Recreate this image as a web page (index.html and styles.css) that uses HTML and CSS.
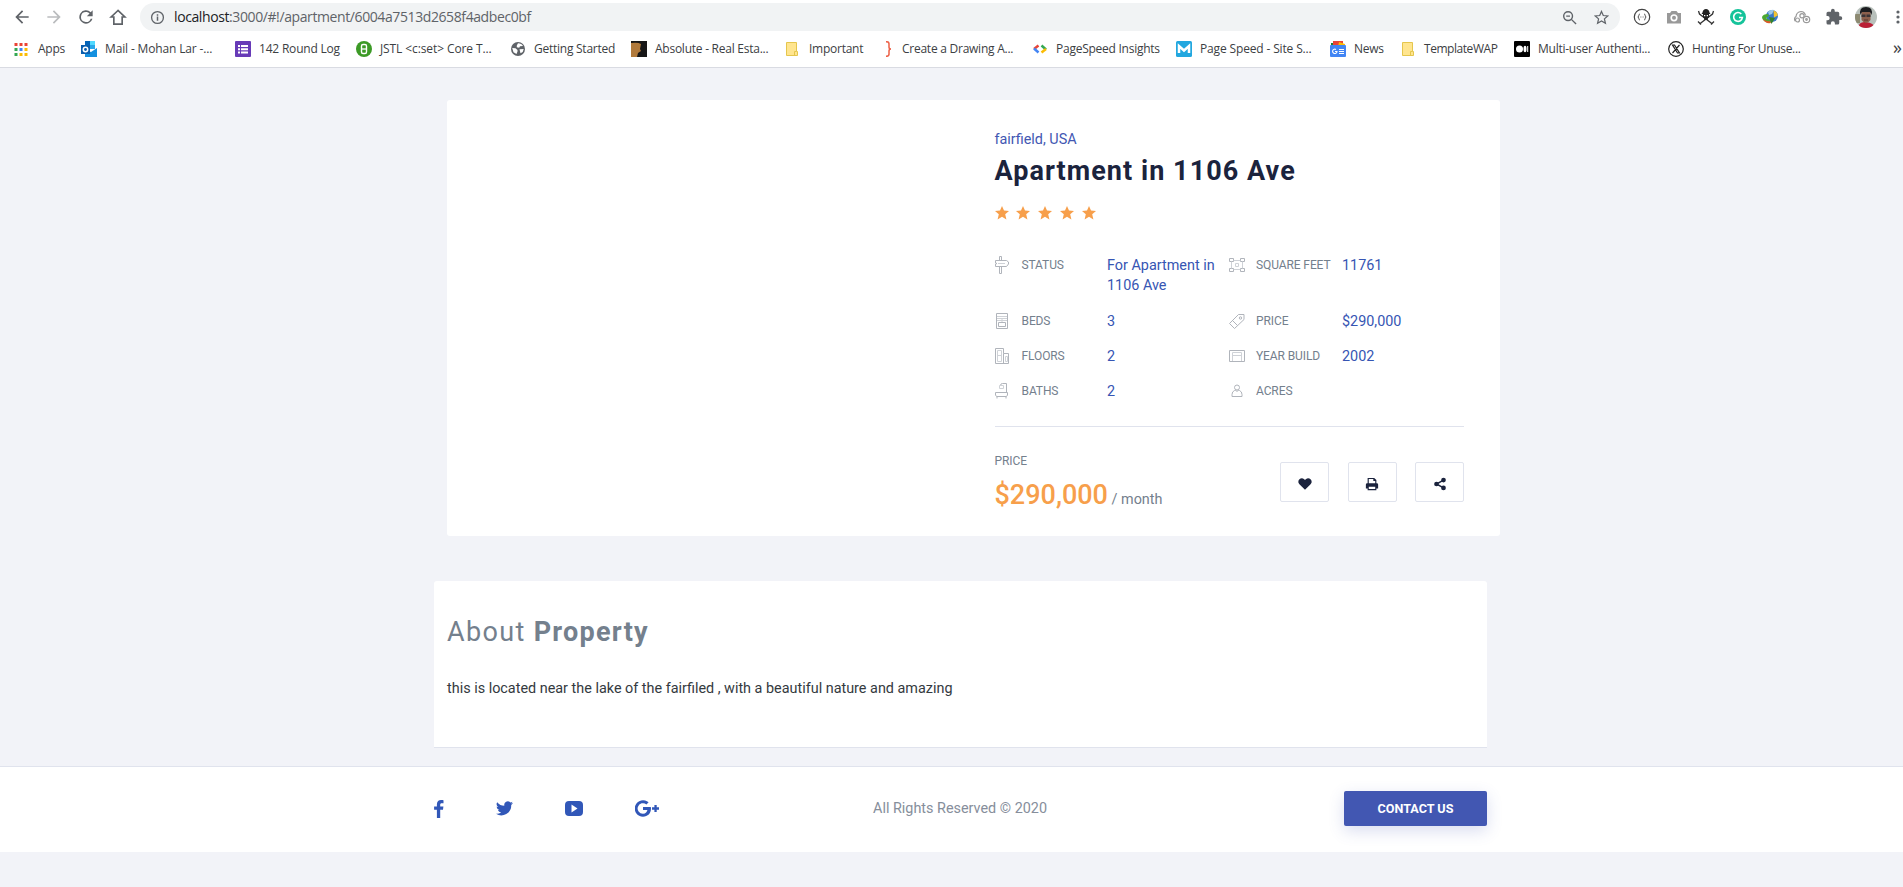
FILE: index.html
```html
<!DOCTYPE html>
<html lang="en">
<head>
<meta charset="utf-8">
<title>Apartment in 1106 Ave</title>
<link rel="stylesheet" href="styles.css">
</head>
<body>
<header class="browser">
  <div class="toolbar">
    <svg class="nav-icon" viewBox="0 0 24 24"><path d="M20 11H7.8l5.6-5.6L12 4l-8 8 8 8 1.4-1.4L7.8 13H20z"/></svg>
    <svg class="nav-icon muted" viewBox="0 0 24 24"><path d="M4 11h12.2l-5.6-5.6L12 4l8 8-8 8-1.4-1.4 5.6-5.6H4z"/></svg>
    <svg class="nav-icon" viewBox="0 0 24 24"><path d="M17.65 6.35A8 8 0 1 0 19.73 14h-2.08A6 6 0 1 1 12 6c1.66 0 3.14.69 4.22 1.78L13 11h7V4z"/></svg>
    <svg class="nav-icon" viewBox="0 0 24 24"><path d="M12 4.200 3.800 12H7v8.500h10V12h3.200z" fill="none" stroke="#5f6368" stroke-width="2"/></svg>
    <div class="address">
      <svg class="info" viewBox="0 0 16 16"><circle cx="8" cy="8" r="6.3" fill="none" stroke="#5f6368" stroke-width="1.4"/><path d="M7.2 7h1.6v4.5H7.200zM7.200 4.500h1.600v1.500H7.200z"/></svg>
      <span class="url"><b>localhost</b>:3000/#!/apartment/6004a7513d2658f4adbec0bf</span>
      <svg class="tool" viewBox="0 0 16 16"><g fill="none" stroke="#5f6368" stroke-width="1.5"><circle cx="6.500" cy="6.500" r="4.700"/><path d="M10 10l5 5M4.500 6.500h4"/></g></svg>
      <svg class="tool" viewBox="0 0 16 16"><path d="M8 1.500l1.900 4.400 4.800.4-3.600 3.200 1.100 4.700L8 11.700l-4.200 2.500 1.100-4.700L1.300 6.300l4.800-.4z" fill="none" stroke="#5f6368" stroke-width="1.300"/></svg>
    </div>
    <div class="extensions">
      <svg viewBox="0 0 18 18"><circle cx="9" cy="9" r="7.700" fill="none" stroke="#444" stroke-width="1.200"/><path d="M6.800 6c-1.500 0-.5 3-2 3 1.500 0 .5 3 2 3M11.200 6c1.500 0 .5 3 2 3-1.500 0-.5 3-2 3M7.500 9h.8M9.700 9h.8" fill="none" stroke="#444"/></svg>
      <svg viewBox="0 0 18 18"><path d="M2 5h3l1.500-2h5L13 5h3v10.500H2z" fill="#999"/><circle cx="9" cy="9.800" r="3.600" fill="#fff"/><circle cx="9" cy="9.800" r="2" fill="#999"/></svg>
      <svg viewBox="0 0 18 18"><path d="M1.500 3l1 3 13 10M16.500 3l-1 3-13 10M1 13.500l3 3M17 13.500l-3 3" fill="none" stroke="#333" stroke-width="1.300"/><path d="M5.500 4.500Q6 1 9 1t3.500 3.500L13.500 6h-9zM6 6h6v3l-1.200 1.200V12H7.200v-1.800L6 9z" fill="#222"/><path d="M7 7h1.300v1.300H7zM9.700 7H11v1.300H9.700z" fill="#fff"/></svg>
      <svg viewBox="0 0 18 18"><circle cx="9" cy="9" r="8" fill="#15c39a"/><path d="M12.300 6A4.400 4.400 0 1 0 13.400 9.500H10" fill="none" stroke="#fff" stroke-width="1.600"/></svg>
      <svg viewBox="0 0 18 18"><circle cx="11" cy="8" r="6" fill="#3a78c8"/><path d="M7 4q3-3 6-2l-2 4-3 1z" fill="#9cc8e8"/><path d="M12.500 2.500q4 1 4.300 5l-3.800 2z" fill="#f2c230"/><path d="M1 9q1-3 6-3l1 2-3 2 5 3-1 2Q1 14 1 9z" fill="#4ca832"/><path d="M2 11q4 3 7 2l1 2Q4 16 2 11z" fill="#dc5a2a"/><path d="M8 9l6 1-3.500 6z" fill="#35802c"/></svg>
      <svg viewBox="0 0 18 18"><g fill="none" stroke="#999" stroke-width="1.200"><path d="M2.200 13A3 3 0 0 1 3 8.500q.5-4.500 5-5 3.500 0 4.500 4"/><circle cx="9" cy="7.800" r="2.100"/><circle cx="4.500" cy="12" r="2"/><circle cx="13.500" cy="11.500" r="3.200"/><circle cx="13.500" cy="11.500" r=".8"/></g></svg>
      <svg viewBox="0 0 24 24"><path d="M20.500 11H19V7a2 2 0 0 0-2-2h-4V3.500a2.500 2.500 0 0 0-5 0V5H4a2 2 0 0 0-2 2v3.800h1.500a2.700 2.700 0 0 1 0 5.400H2V20a2 2 0 0 0 2 2h3.800v-1.500a2.700 2.700 0 0 1 5.400 0V22H17a2 2 0 0 0 2-2v-4h1.500a2.500 2.500 0 0 0 0-5z" fill="#5f6368"/></svg>
    </div>
    <svg class="avatar" viewBox="0 0 22 22"><clipPath id="face"><circle cx="11" cy="11" r="11"/></clipPath><g clip-path="url(#face)"><path d="M0 0h22v22H0z" fill="#b8c0bb"/><path d="M0 8h5v9H0z" fill="#8d8a72"/><path d="M3 22q1-7 8-6 8 1 9 6z" fill="#bb2036"/><path d="M6.500 6h9v8q-4.500 6-9 0z" fill="#8b5f4c"/><path d="M5.500 9q-2-8 5.500-8t5.500 8l-1.500-3H7z" fill="#1c1d20"/><path d="M6.500 8.500h4v2.500h-4zM11.500 8.500h4v2.500h-4z" fill="#3a3436"/><path d="M9 14h4" stroke="#5b342c"/></g></svg>
    <svg class="kebab" viewBox="0 0 4 16"><circle cx="2" cy="3" r="1.600"/><circle cx="2" cy="8" r="1.600"/><circle cx="2" cy="13" r="1.600"/></svg>
  </div>
  <nav class="bookmarks">
    <a class="bm bm-apps"><svg viewBox="0 0 16 16"><path d="M1.500 2h3v3h-3zM6.500 2h3v3h-3zM11.500 2h3v3h-3z" fill="#ea4335"/><path d="M1.500 7h3v3h-3zM1.500 12h3v3h-3z" fill="#34a853"/><path d="M6.500 7h3v3h-3z" fill="#4285f4"/><path d="M11.500 7h3v3h-3zM6.500 12h3v3h-3zM11.500 12h3v3h-3z" fill="#fbbc04"/></svg><span>Apps</span></a>
    <a class="bm bm-mail"><svg viewBox="0 0 16 16"><path d="M4 0h10v8H4z" fill="#28a8ea"/><path d="M9 0h5v4H9z" fill="#50d9ff"/><path d="M4 0h5v4H4z" fill="#0364b8"/><path d="M4 9l6 2 6-4v9H4z" fill="#1490df"/><path d="M0 4h9v9H0z" fill="#0a5ead"/><circle cx="4.500" cy="8.500" r="2.200" fill="none" stroke="#fff" stroke-width="1.500"/></svg><span>Mail - Mohan Lar -...</span></a>
    <a class="bm bm-log"><svg viewBox="0 0 16 16"><rect width="16" height="16" rx="1" fill="#673ab7"/><path d="M3 4h2v2H3zM3 7.200h2v2H3zM3 10.400h2v2H3zM6 4h7v2H6zM6 7.200h7v2H6zM6 10.400h7v2H6z" fill="#fff"/></svg><span>142 Round Log</span></a>
    <a class="bm bm-jstl"><svg viewBox="0 0 16 16"><circle cx="8" cy="8" r="8" fill="#3c9a26"/><rect x="5.500" y="3.500" width="5" height="9" rx="1.500" fill="none" stroke="#fff" stroke-width="1.400"/><path d="M5.500 8h5" stroke="#fff" stroke-width="1.300"/></svg><span>JSTL &lt;c:set&gt; Core T...</span></a>
    <a class="bm bm-start"><svg viewBox="0 0 16 16"><circle cx="8" cy="8" r="7" fill="#5f6368"/><path d="M2.200 7l3.300.3 2 1.700v1.500L6.500 13 3.500 11.200zM8 2.200q3.500 0 5 2.800l-3 .2-.8 1.600-2.400-.6 0-1.700zM9.500 8.300l4.200-.3-1 3-2.200 1.200z" fill="#fff"/></svg><span>Getting Started</span></a>
    <a class="bm bm-abs"><svg viewBox="0 0 16 16"><path d="M0 0h16v16H0z" fill="#171717"/><path d="M0 2q7-1 10 1l-1 5 1 2-3 2-1 4H0z" fill="#b17a3b"/></svg><span>Absolute - Real Esta...</span></a>
    <a class="bm bm-imp"><svg viewBox="0 0 16 16"><path d="M2.500 1.500h10v9h1v4h-11z" fill="#ffe58f" stroke="#e5c64d"/><path d="M10.500 14v-3.500h2" fill="none" stroke="#e5c64d"/></svg><span>Important</span></a>
    <a class="bm bm-draw"><svg viewBox="0 0 16 16"><path d="M6 .7q3 0 3 2v3.500Q9 8 11 8q-2 0-2 2v3.300q0 2-3 2" fill="none" stroke="#ed6046" stroke-width="1.500"/></svg><span>Create a Drawing A...</span></a>
    <a class="bm bm-psi"><svg viewBox="0 0 16 16"><g fill="none" stroke-width="2.500"><path d="M6.500 4.500L2 8" stroke="#ea4335"/><path d="M2 7.500l4.500 4" stroke="#4285f4"/><path d="M9.500 4.500L14 8.500" stroke="#34a853"/><path d="M14 8l-4.500 3.500" stroke="#fbbc04"/></g></svg><span>PageSpeed Insights</span></a>
    <a class="bm bm-speed"><svg viewBox="0 0 16 16"><rect width="16" height="16" rx="1.500" fill="#22a7df"/><path d="M3 12V5l5 4.500L13 5v7" fill="none" stroke="#fff" stroke-width="2.500"/></svg><span>Page Speed - Site S...</span></a>
    <a class="bm bm-news"><svg viewBox="0 0 16 16"><path d="M1 2h11v5H1z" fill="#188038"/><path d="M3 0h10v5H3z" fill="#ea4335"/><path d="M9 1l6 2v3H8z" fill="#fbbc04"/><rect y="4" width="16" height="12" rx="1" fill="#4285f4"/><path d="M6 8.500A2.200 2.200 0 1 0 7 10.500H5M9 8.500h5M9 10.500h5M9 12.500h5" fill="none" stroke="#fff" stroke-width="1.100"/></svg><span>News</span></a>
    <a class="bm bm-wap"><svg viewBox="0 0 16 16"><path d="M2.500 1.500h10v9h1v4h-11z" fill="#ffe58f" stroke="#e5c64d"/><path d="M10.500 14v-3.500h2" fill="none" stroke="#e5c64d"/></svg><span>TemplateWAP</span></a>
    <a class="bm bm-multi"><svg viewBox="0 0 16 16"><rect width="16" height="16" rx="1" fill="#000"/><circle cx="5.500" cy="8" r="3.500" fill="#fff"/><ellipse cx="11" cy="8" rx="1.500" ry="3.300" fill="#fff"/><path d="M13.200 5h1v6h-1z" fill="#fff"/></svg><span>Multi-user Authenti...</span></a>
    <a class="bm bm-hunt"><svg viewBox="0 0 16 16"><circle cx="8" cy="8" r="7.300" fill="none" stroke="#222" stroke-width="1.200"/><path d="M4.500 4h2l5 8h-2zM11.500 4L4.500 12" fill="none" stroke="#222" stroke-width="1.200"/></svg><span>Hunting For Unuse...</span></a>
    <span class="overflow">»</span>
  </nav>
</header>

<main class="page">
  <section class="listing">
    <div class="details">
      <p class="place">fairfield, USA</p>
      <h1 class="title">Apartment in 1106 Ave</h1>
      <div class="stars">
        <svg viewBox="0 0 14 14"><path d="M7 0l2 4.600 5 .4-3.800 3.300 1.200 5.200L7 10.800l-4.400 2.700 1.200-5.200L0 5l5-.4z"/></svg>
        <svg viewBox="0 0 14 14"><path d="M7 0l2 4.600 5 .4-3.800 3.300 1.200 5.200L7 10.800l-4.400 2.700 1.200-5.200L0 5l5-.4z"/></svg>
        <svg viewBox="0 0 14 14"><path d="M7 0l2 4.600 5 .4-3.800 3.300 1.200 5.200L7 10.800l-4.400 2.700 1.200-5.200L0 5l5-.4z"/></svg>
        <svg viewBox="0 0 14 14"><path d="M7 0l2 4.600 5 .4-3.800 3.300 1.200 5.200L7 10.800l-4.400 2.700 1.200-5.200L0 5l5-.4z"/></svg>
        <svg viewBox="0 0 14 14"><path d="M7 0l2 4.600 5 .4-3.800 3.300 1.200 5.200L7 10.800l-4.400 2.700 1.200-5.200L0 5l5-.4z"/></svg>
      </div>
      <dl class="facts">
        <dt><svg viewBox="0 0 16 18"><path d="M4.500 4.500v-4h2v4M4.500 10.500v7h2v-7M.5 4.500h11l2 1.500v2l-2 2.500H.5V8l1.500-.5L.5 7z"/><path class="soft" d="M3 7.500h7"/></svg>STATUS</dt><dd>For Apartment in 1106 Ave</dd>
        <dt><svg viewBox="0 0 16 18"><path d="M.5 2.500h4v3h-4zM11.500 2.500h4v3h-4zM.5 12.500h4v3h-4zM11.500 12.500h4v3h-4z"/><path class="soft" d="M4.500 4.500h7M4.500 13.500h7M2.500 5.500v7M13.500 5.500v7M6.500 7.500h3v3h-3z"/></svg>SQUARE FEET</dt><dd>11761</dd>
        <dt><svg viewBox="0 0 16 18"><path d="M1.500 1.500h11v15h-11zM3.500 10.500h7v4h-7z"/><path class="soft" d="M2 4.500h10M2 6.500h10M7 7v3M2 8.500h10"/></svg>BEDS</dt><dd>3</dd>
        <dt><svg viewBox="0 0 16 18"><path d="M9.500 2.500h5.500v5l-9.500 9-5-5zM3.500 8.500l5 5"/><circle cx="11.500" cy="6" r="1.200"/></svg>PRICE</dt><dd>$290,000</dd>
        <dt><svg viewBox="0 0 16 18"><path d="M.5 1.500h8v5h5v10H.5zM8.500 6.500v10"/><path class="soft" d="M2.500 3.500h4v11h-4zM2.500 8.500h4M10.500 9.500h2v5h-2z"/></svg>FLOORS</dt><dd>2</dd>
        <dt><svg viewBox="0 0 16 18"><path d="M.5 3.500h15v11H.5z"/><path class="soft" d="M3.500 14V5.500h9V14M3.500 8.500h9"/></svg>YEAR BUILD</dt><dd>2002</dd>
        <dt><svg viewBox="0 0 16 18"><path d="M.5 10.500h12v2.500l-1 1.500h-10L.5 13zM2 14.500v2M11 14.500v2M11.500 10.500v-9h-4q-2 0-2 2"/><path class="soft" d="M4.500 3.500h4v3h-4z"/></svg>BATHS</dt><dd>2</dd>
        <dt><svg viewBox="0 0 16 18"><circle cx="8" cy="5.500" r="2.500"/><path d="M3 14.500v-2q0-3 2.500-4h1q1.500 1.500 3 0h1q2.500 1 2.500 4v2z"/></svg>ACRES</dt><dd></dd>
      </dl>
      <div class="offer">
        <div>
          <div class="offer-label">PRICE</div>
          <div class="amount"><strong>$290,000</strong> / month</div>
        </div>
        <div class="actions">
          <button><svg viewBox="0 0 16 16"><path d="M8 14.500L1.900 8.600C-1.500 5.200 1.500 1.500 4.400 1.500 6.300 1.500 7.400 2.800 8 3.500c.6-.7 1.700-2 3.600-2 2.900 0 5.900 3.700 2.500 7.100z"/></svg></button>
          <button><svg viewBox="0 0 16 16"><path d="M3 7V1h7.500L13 3.500V7h.5A1.500 1.500 0 0 1 15 8.500V13h-2v2H3v-2H1V8.500A1.500 1.500 0 0 1 2.500 7zm1.300 0h7.400V4.500H9.500V2.300H4.300zm0 4v2.700h7.400V11z" fill-rule="evenodd"/></svg></button>
          <button><svg viewBox="0 0 16 16"><circle cx="12" cy="3.500" r="2.700"/><circle cx="4" cy="8" r="2.700"/><circle cx="12" cy="12.500" r="2.700"/><path d="M12 3.500L4 8l8 4.500" fill="none" stroke="#1b233d" stroke-width="1.700"/></svg></button>
        </div>
      </div>
    </div>
  </section>
  <section class="about">
    <h2>About <b>Property</b></h2>
    <p>this is located near the lake of the fairfiled , with a beautiful nature and amazing</p>
  </section>
</main>

<footer class="footer">
  <div class="footer-inner">
    <div class="social">
      <svg class="fb" viewBox="0 0 10 18"><path d="M9.500.2v3H7.800C6.500 3.200 6.200 3.800 6.200 4.700v1.900h3.200l-.4 3.200H6.200V18H2.900V9.800H.1V6.600h2.800V4.200C2.900 1.500 4.600 0 7.100 0c1.200 0 2.200.1 2.400.2z"/></svg>
      <svg class="tw" viewBox="0 0 24 20"><path d="M24 2.400a10 10 0 0 1-2.800.8A4.900 4.900 0 0 0 23.300.5a10 10 0 0 1-3.100 1.200A4.900 4.900 0 0 0 11.800 6.200 14 14 0 0 1 1.700 1a4.900 4.900 0 0 0 1.500 6.600A4.900 4.900 0 0 1 1 7v.1A4.900 4.900 0 0 0 4.900 11.900a5 5 0 0 1-2.200.1 4.900 4.900 0 0 0 4.600 3.400A9.900 9.900 0 0 1 0 17.500 14 14 0 0 0 21.500 5.100 10 10 0 0 0 24 2.400z"/></svg>
      <svg class="yt" viewBox="0 0 18 15"><path d="M4 0h10q4 0 4 4v7q0 4-4 4H4q-4 0-4-4V4q0-4 4-4zm2.500 3.500v8l6-4z" fill-rule="evenodd"/></svg>
      <svg class="gp" viewBox="0 0 24 17"><path d="M8 7v3h4.400c-.3 1.500-1.700 3.800-4.400 3.800A5.300 5.300 0 1 1 11.400 4.500l2.200-2.200A8.300 8.300 0 1 0 8 16.800c4.800 0 8-3.400 8-8.200L15.800 7zM24 7.300h-2.300V5h-2.300v2.300H17v2.400h2.400V12h2.300V9.700H24z"/></svg>
    </div>
    <div class="rights">All Rights Reserved © 2020</div>
    <button class="contact">CONTACT US</button>
  </div>
</footer>
</body>
</html>
```

FILE: styles.css
```css
* { box-sizing: border-box; }
body { margin: 0; background: #f2f3f8; color: #343a40; font-family: Roboto, sans-serif; }
h1, h2, p, dl, dd { margin: 0; }
svg { display: block; flex: none; }
button { font-family: inherit; padding: 0; }

/* browser bar */
.browser { height: 68px; background: #fff; border-bottom: 1px solid #d9dbe2; overflow: hidden; font-family: "Open Sans", "Noto Sans", sans-serif; }
.toolbar { height: 34px; display: flex; align-items: center; padding-left: 12px; }
.nav-icon { width: 20px; height: 20px; margin-right: 12px; fill: #5f6368; }
.nav-icon.muted { fill: #babcbe; }
.address { height: 28px; width: 1480px; display: flex; align-items: center; background: #f1f3f4; border-radius: 14px; padding: 0 11px 0 10px; }
.info { width: 15px; height: 15px; margin-right: 9px; fill: #5f6368; }
.url { flex: 1; font-size: 14px; line-height: 20px; color: #5f6368; letter-spacing: -0.4px; white-space: nowrap; }
.url b { font-weight: 400; color: #202124; }
.tool { width: 15px; height: 15px; margin-left: 17px; }
.extensions { display: flex; gap: 14px; margin-left: 13px; }
.extensions svg { width: 18px; height: 18px; }
.avatar { width: 22px; height: 22px; margin-left: 12px; }
.kebab { width: 4px; height: 18px; margin-left: 19px; fill: #5f6368; }
.bookmarks { height: 30px; display: flex; align-items: center; padding-left: 13px; font-size: 12px; color: #3c4043; }
.bm { display: flex; align-items: center; gap: 9px; flex: none; white-space: nowrap; letter-spacing: -0.25px; }
.bm svg { width: 16px; height: 16px; }
.bm span { padding-bottom: 1px; }
.bm-apps { width: 68px; }
.bm-mail { width: 154px; gap: 8px; letter-spacing: -0.15px; }
.bm-log { width: 121px; gap: 8px; letter-spacing: -0.2px; }
.bm-jstl { width: 154px; gap: 8px; letter-spacing: -0.1px; }
.bm-start { width: 121px; gap: 8px; letter-spacing: -0.25px; }
.bm-abs { width: 153px; gap: 8px; }
.bm-imp { width: 96px; gap: 9px; }
.bm-draw { width: 152px; gap: 6px; }
.bm-psi { width: 144px; gap: 8px; }
.bm-speed { width: 154px; gap: 8px; letter-spacing: -0.15px; }
.bm-news { width: 70px; gap: 8px; }
.bm-wap { width: 114px; gap: 8px; letter-spacing: -0.45px; }
.bm-multi { width: 154px; gap: 8px; }
.bm-hunt { width: 225px; gap: 8px; letter-spacing: -0.3px; }
.overflow { font-size: 18px; line-height: 18px; padding-bottom: 4px; }

/* listing */
.page { width: 1066px; margin-left: 434px; padding-top: 32px; }
.listing { height: 436px; margin-left: 13px; background: #fff; border-radius: 3px; padding: 29px 36px 0 547.5px; }
.place { font-size: 14.4px; line-height: 22px; color: #4257b2; }
.title { margin-top: 3px; font-size: 27px; line-height: 34px; font-weight: 700; letter-spacing: 1.05px; color: #1b233d; white-space: nowrap; }
.stars { display: flex; gap: 7.800px; margin-top: 18px; fill: #f79f4b; }
.stars svg { width: 14px; height: 14px; }
.facts { display: grid; grid-template-columns: 112.500px 122px 113px 122px; row-gap: 14px; margin-top: 35px; }
.facts dt { display: flex; align-items: flex-start; gap: 11px; font-size: 12px; line-height: 20px; letter-spacing: -0.1px; color: #74808d; white-space: nowrap; }
.facts dd { min-height: 21px; padding-top: 1px; font-size: 14.400px; line-height: 20.250px; color: #3655b3; }
.facts svg { width: 16px; height: 18px; margin-top: 1px; fill: none; stroke: #b0b4bb; }
.facts .soft { stroke: #cfd2d7; }
.offer { display: flex; justify-content: space-between; align-items: flex-start; margin-top: 24px; border-top: 1px solid #e0e3ed; padding-top: 26px; }
.offer-label { font-size: 12px; line-height: 16px; letter-spacing: -0.1px; color: #74808d; }
.amount { margin-top: 7px; font-size: 14.400px; line-height: 38px; color: #74808d; white-space: nowrap; }
.amount strong { font-size: 27px; font-weight: 500; color: #f79f4b; }
.actions { display: flex; gap: 18.500px; margin-top: 9px; }
.actions button { width: 49px; height: 40px; display: grid; place-items: center; background: #fff; border: 1px solid #e0e3ed; border-radius: 2px; }
.actions svg { width: 14px; height: 14px; margin-top: 4px; fill: #1b233d; }

/* about */
.about { width: 1053px; height: 167px; margin-top: 45px; background: #fff; border-bottom: 1px solid #e0e3ed; border-radius: 3px 3px 0 0; padding: 34px 13px 0; }
.about h2 { font-size: 27px; line-height: 34px; font-weight: 400; letter-spacing: 1.350px; color: #74808d; }
.about b { font-weight: 700; letter-spacing: 1.250px; }
.about p { margin-top: 29px; font-size: 14.400px; line-height: 22px; }

/* footer */
.footer { height: 86px; margin-top: 18px; background: #fff; border-top: 1px solid #e0e3ed; }
.footer-inner { width: 1053px; margin-left: 434px; padding-top: 24px; display: grid; grid-template-columns: 439px 471px 143px; align-items: center; }
.social { display: flex; align-items: center; fill: #3157b8; }
.fb { width: 10px; height: 18px; margin-right: 52px; }
.tw { width: 17px; height: 15px; margin-right: 52px; }
.yt { width: 18px; height: 15px; margin-right: 52px; }
.gp { width: 24px; height: 17px; }
.rights { font-size: 14.400px; color: #868e9b; }
.contact { height: 35px; border: 0; border-radius: 2px; background: #4257b2; color: #fff; font-size: 12.600px; font-weight: 700; box-shadow: 0 5px 16px rgba(66, 87, 178, .2); }
```
